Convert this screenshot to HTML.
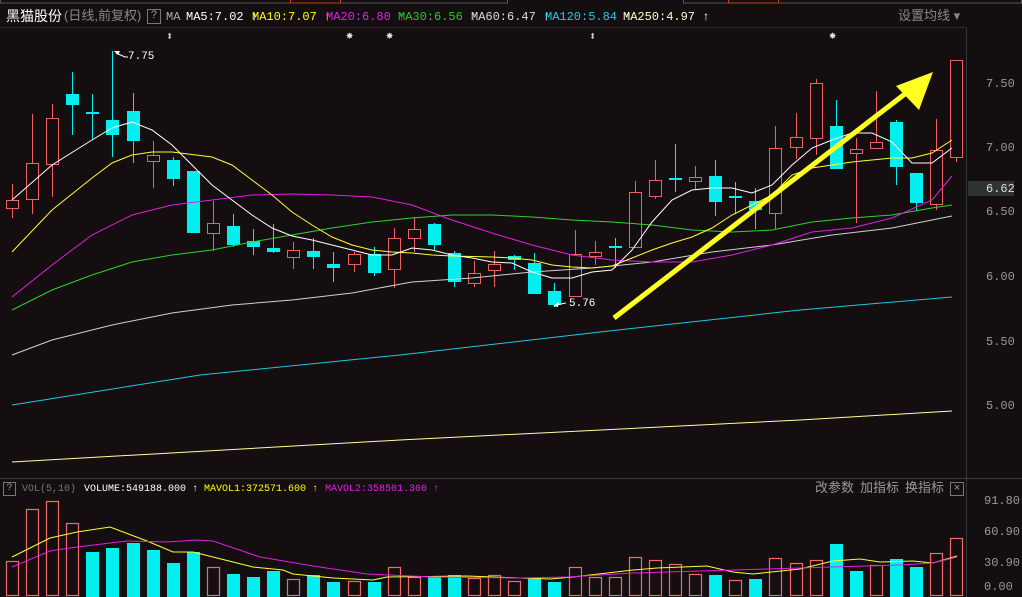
<!DOCTYPE html>
<html><head><meta charset="utf-8">
<style>
html,body{margin:0;padding:0;background:#140e11;width:1022px;height:597px;overflow:hidden}
body{position:relative;font-family:"Liberation Mono","Noto Sans CJK SC",monospace}
.t{position:absolute;white-space:nowrap;font-size:12px;line-height:14px}
.v{font-size:10px}
.cn{font-family:"Liberation Sans","Noto Sans CJK SC",sans-serif}
svg{position:absolute;left:0;top:0}
</style></head><body>
<svg id="s" width="1022" height="597" xmlns="http://www.w3.org/2000/svg">
<rect x="0" y="0" width="1022" height="597" fill="#140e11"/>
<rect x="0.5" y="-1" width="507" height="4" fill="none" stroke="#555"/>
<rect x="683.5" y="-1" width="338" height="4" fill="none" stroke="#555"/>
<rect x="290.5" y="-1" width="50" height="4" fill="none" stroke="#c04010"/>
<rect x="728.5" y="-1" width="50" height="4" fill="none" stroke="#c04010"/>
<line x1="0" y1="27.5" x2="966" y2="27.5" stroke="#2a2a2a"/>
<line x1="0" y1="478.5" x2="1022" y2="478.5" stroke="#3a3a3a"/>
<line x1="966.5" y1="28" x2="966.5" y2="597" stroke="#2c3a3a"/>
<rect x="968" y="181" width="46" height="15" fill="#2f3332"/>
<g id="g"></g>
</svg>
<div class="t cn" style="left:6px;top:7px;color:#fff;font-size:14px;line-height:18px">黑猫股份</div>
<div class="t cn" style="left:64px;top:8px;color:#888;font-size:13px;line-height:16px">(日线,前复权)</div>
<div class="t" style="left:147px;top:9px;width:12px;height:13px;border:1px solid #777;color:#999;text-align:center;line-height:13px;font-size:11px">?</div>
<div class="t" style="left:166px;top:10px;color:#aaa">MA</div>
<div class="t" style="left:186px;top:10px;color:#fff">MA5:7.02 ↑</div>
<div class="t" style="left:252px;top:10px;color:#ff0">MA10:7.07 ↑</div>
<div class="t" style="left:326px;top:10px;color:#e020e0">MA20:6.80 ↑</div>
<div class="t" style="left:398px;top:10px;color:#2c2">MA30:6.56 ↑</div>
<div class="t" style="left:471px;top:10px;color:#ddd">MA60:6.47 ↑</div>
<div class="t" style="left:545px;top:10px;color:#2cd">MA120:5.84 ↑</div>
<div class="t" style="left:623px;top:10px;color:#ffc">MA250:4.97 ↑</div>
<div class="t cn" style="left:898px;top:9px;color:#888;font-size:13px">设置均线 ▾</div>
<div class="t" style="left:166px;top:30px;color:#ccc">⬍</div>
<div class="t" style="left:589px;top:30px;color:#ccc">⬍</div>
<div class="t" style="left:346px;top:29px;color:#ddd">✸</div>
<div class="t" style="left:386px;top:29px;color:#ddd">✸</div>
<div class="t" style="left:829px;top:29px;color:#ddd">✸</div>
<div class="t" style="left:128px;top:50px;color:#fff;font-size:11px">7.75</div>
<div class="t" style="left:569px;top:297px;color:#fff;font-size:11px">5.76</div>
<div class="t" style="left:986px;top:77px;color:#999">7.50</div>
<div class="t" style="left:986px;top:141px;color:#999">7.00</div>
<div class="t" style="left:986px;top:182px;color:#ddd">6.62</div>
<div class="t" style="left:986px;top:205px;color:#999">6.50</div>
<div class="t" style="left:986px;top:270px;color:#999">6.00</div>
<div class="t" style="left:986px;top:335px;color:#999">5.50</div>
<div class="t" style="left:986px;top:399px;color:#999">5.00</div>
<div class="t" style="left:3px;top:482px;width:11px;height:12px;border:1px solid #777;color:#999;text-align:center;line-height:12px;font-size:10px">?</div>
<div class="t v" style="left:22px;top:483px;color:#777">VOL(5,10)</div>
<div class="t v" style="left:84px;top:483px;color:#fff">VOLUME:549188.000 ↑</div>
<div class="t v" style="left:204px;top:483px;color:#ff0">MAVOL1:372571.600 ↑</div>
<div class="t v" style="left:325px;top:483px;color:#e020e0">MAVOL2:358501.300 ↑</div>
<div class="t cn" style="left:815px;top:481px;color:#999;font-size:13px">改参数</div>
<div class="t cn" style="left:860px;top:481px;color:#999;font-size:13px">加指标</div>
<div class="t cn" style="left:905px;top:481px;color:#999;font-size:13px">换指标</div>
<div class="t" style="left:950px;top:482px;width:12px;height:12px;border:1px solid #777;color:#999;text-align:center;line-height:12px;font-size:11px">×</div>
<div class="t" style="left:984px;top:494px;color:#999">91.80</div>
<div class="t" style="left:984px;top:525px;color:#999">60.90</div>
<div class="t" style="left:984px;top:556px;color:#999">30.90</div>
<div class="t" style="left:984px;top:580px;color:#999">0.00</div>
<script>
var R="#f06060",C="#00f0f0",g=document.getElementById('g'),h='';
var k=[[R,200,208,184,218],[R,163,199,114,214],[R,118,164,104,197],[C,94,105,72,135],[C,112,114,94,140],[C,120,135,51,157],[C,111,141,93,163],[R,155,161,141,188],[C,160,179,157,186],[C,171,233,171,233],
[R,223,233,201,251],[C,226,245,214,247],[C,241,247,229,255],[C,248,252,224,253],[R,250,257,242,269],[C,251,257,238,269],[C,264,268,252,282],[R,254,264,252,272],[C,254,273,247,276],[R,238,269,228,288],
[R,229,238,217,252],[C,224,245,223,250],[C,253,282,251,287],[R,273,283,261,287],[R,264,270,251,287],[C,256,260,255,270],[C,263,294,253,294],[C,291,305,283,307],[R,254,296,230,296],[R,252,256,241,265],
[C,246,248,238,268],[R,192,247,181,247],[R,180,196,160,199],[C,178,180,144,192],[R,177,181,166,190],[C,176,202,160,216],[C,196,198,182,214],[C,201,210,188,229],[R,148,213,126,229],[R,137,147,113,159],
[R,83,138,79,155],[C,126,169,100,169],[R,149,153,138,223],[R,142,148,91,148],[C,122,167,120,185],[C,173,203,173,211],[R,150,204,119,210],[R,60,157,60,162]];
var v=[[R,561],[R,509],[R,501],[R,523],[C,552],[C,548],[C,543],[C,550],[C,563],[C,552],[R,567],[C,574],[C,577],[C,571],[R,579],[C,575],[C,582],[R,581],[C,582],[R,567],[R,577],[C,577],[C,575],[R,578],[R,575],[R,581],[C,578],[C,582],[R,567],[R,577],[R,577],[R,557],[R,560],[R,564],[R,574],[C,575],[R,580],[C,579],[R,558],[R,563],[R,560],[C,544],[C,571],[R,565],[C,559],[C,567],[R,553],[R,538]];
function X(i){return 12+i*20.09}
k.forEach(function(c,i){var x=Math.round(X(i));
h+='<line x1="'+(x+.5)+'" y1="'+c[3]+'" x2="'+(x+.5)+'" y2="'+c[4]+'" stroke="'+c[0]+'"/>';
if(c[0]==R)h+='<rect x="'+(x-5.5)+'" y="'+(c[1]+.5)+'" width="12" height="'+Math.max(c[2]-c[1],1)+'" fill="#140e11" stroke="'+R+'"/>';
else h+='<rect x="'+(x-6)+'" y="'+c[1]+'" width="13" height="'+Math.max(c[2]-c[1],1)+'" fill="'+C+'"/>';});
v.forEach(function(c,i){var x=Math.round(X(i));
if(c[0]==R)h+='<rect x="'+(x-5.5)+'" y="'+(c[1]+.5)+'" width="12" height="'+(595-c[1])+'" fill="none" stroke="#f46868" stroke-width="1.2"/>';
else h+='<rect x="'+(x-6)+'" y="'+c[1]+'" width="13" height="'+(597-c[1])+'" fill="'+C+'"/>';});
function pl(p,col,w){h+='<polyline points="'+p+'" fill="none" stroke="'+col+'" stroke-width="'+(w||1)+'"/>';}
pl("12,462 400,440 800,420 952,411","#ffffa0");
pl("12,405 200,375 400,355 600,332 800,310 952,297","#20c8e0");
pl("12,355 52,340 112,325 172,313 232,305 292,300 352,293 412,282 472,278 532,272 592,268 652,262 712,252 772,245 832,235 892,228 952,216","#d0d0d0");
pl("12,310 52,290 92,275 132,262 172,255 212,250 252,242 292,235 332,228 372,222 412,218 452,215 492,215 532,217 572,220 612,222 652,225 692,230 732,232 772,230 812,222 852,218 892,215 932,208 952,205","#30d030");
pl("12,297 52,265 92,235 132,215 172,205 212,200 252,195 292,194 332,195 372,197 412,205 452,220 492,233 532,245 572,255 612,260 652,262 692,262 732,255 772,245 812,232 852,228 892,218 932,200 952,176","#e020e0");
pl("12,252 52,210 92,178 112,163 132,155 152,152 172,152 212,157 232,165 252,180 272,195 292,212 312,225 332,237 352,245 372,250 392,252 412,253 432,255 452,256 492,257 512,258 532,260 552,265 572,267 592,268 612,266 632,258 652,250 672,243 692,237 712,228 732,215 752,205 772,195 792,175 812,168 832,165 852,162 872,160 892,158 912,158 932,153 952,140","#ffff30");
pl("12,200 52,165 92,140 112,128 132,122 152,130 172,145 192,165 212,185 232,200 252,215 272,228 292,236 312,240 332,245 352,250 372,255 392,255 412,248 432,250 452,255 472,258 492,262 512,263 532,272 552,278 572,278 592,272 612,270 632,250 652,222 672,200 692,190 712,188 732,188 752,193 772,185 792,165 812,148 832,140 852,133 872,133 892,142 912,163 932,163 952,148","#ffffff");
pl("12,557 50,538 77,532 110,527 147,541 173,552 193,552 213,557 253,567 283,570 293,574 333,578 373,580 387,577 467,576 520,578 550,579 573,577 633,570 657,568 707,566 733,572 753,574 800,569 833,561 860,559 880,562 913,561 933,563 957,556","#ffff30");
pl("12,567 50,551 77,547 127,541 167,542 197,540 213,541 260,557 313,566 367,574 433,577 520,578 567,577 633,573 700,571 767,569 833,567 900,565 933,563 957,557","#e020e0");
pl("614,318 910,90","#ffff20",5);
h+='<polygon points="933,72 919,110 896,86" fill="#ffff20"/>';
h+='<polyline points="116,53 125,57 128,57" fill="none" stroke="#fff"/><polygon points="114,51 120,51 118,55" fill="#fff"/>';
h+='<polyline points="556,305 566,303" stroke="#fff"/><polygon points="553,306 559,302 558,307" fill="#fff"/>';
g.innerHTML=h;
</script>
</body></html>
